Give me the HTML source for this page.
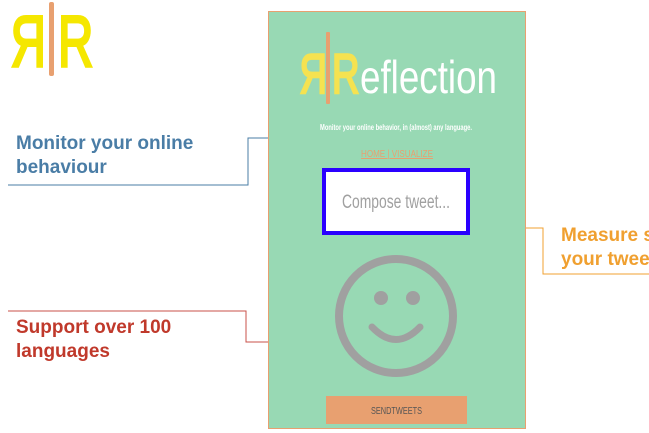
<!DOCTYPE html>
<html><head><meta charset="utf-8"><style>
html,body{margin:0;width:649px;height:433px;overflow:hidden}
body{background:#fff;position:relative;font-family:"Liberation Sans",sans-serif}
.a{position:absolute}
.lbl{font-weight:bold;font-size:19px;line-height:24px}
</style></head><body>
<svg class="a" style="left:0;top:0" width="649" height="433">
 <text x="0" y="0" font-size="72" fill="#f5e700" stroke="#f5e700" stroke-width="3" font-family="Liberation Sans" transform="translate(46,66) scale(-0.68,1)">R</text>
 <text x="0" y="0" font-size="72" fill="#f5e700" stroke="#f5e700" stroke-width="3" font-family="Liberation Sans" transform="translate(58,66) scale(0.68,1)">R</text>
 <rect x="49" y="2" width="5" height="74" rx="2" fill="#e8a070"/>
 <polyline points="8,185 248,185 248,138 268,138" fill="none" stroke="#4a7da6" stroke-width="1"/>
 <polyline points="8,311 246,311 246,342 268,342" fill="none" stroke="#c8504a" stroke-width="1"/>
 <polyline points="526,228 543,228 543,274 649,274" fill="none" stroke="#f0a030" stroke-width="1"/>
 <rect x="268.5" y="11.5" width="257" height="417" fill="#98d9b4" stroke="#e8a070" stroke-width="1"/>
 <text x="0" y="0" font-size="56" fill="#f5e250" stroke="#f5e250" stroke-width="2.5" font-family="Liberation Sans" transform="translate(327,93) scale(-0.68,1)">R</text>
 <text x="0" y="0" font-size="56" fill="#f5e250" stroke="#f5e250" stroke-width="2.5" font-family="Liberation Sans" transform="translate(332,93) scale(0.68,1)">R</text>
 <rect x="326" y="32" width="4" height="72" rx="1" fill="#e8a070"/>
 <text x="360" y="93" font-size="46" fill="#fff" font-family="Liberation Sans" textLength="137" lengthAdjust="spacingAndGlyphs">eflection</text>
 <text x="320" y="130" font-size="8" font-weight="bold" fill="#fff" font-family="Liberation Sans" textLength="152" lengthAdjust="spacingAndGlyphs">Monitor your online behavior, in (almost) any language.</text>
 <text x="361" y="157" font-size="10" fill="#e8a070" font-family="Liberation Sans" textLength="72" lengthAdjust="spacingAndGlyphs" text-decoration="underline">HOME | VISUALIZE</text>
 <rect x="324" y="170" width="144" height="63" fill="#fff" stroke="#2a00ff" stroke-width="4"/>
 <text x="342" y="208" font-size="19" fill="#a0a0a0" font-family="Liberation Sans" textLength="108" lengthAdjust="spacingAndGlyphs">Compose tweet...</text>
 <circle cx="396" cy="316" r="57" fill="none" stroke="#a0a0a0" stroke-width="8"/>
 <circle cx="381" cy="298" r="7" fill="#a0a0a0"/>
 <circle cx="413" cy="298" r="7" fill="#a0a0a0"/>
 <path d="M372 327 Q396 352 420 327" fill="none" stroke="#a0a0a0" stroke-width="7" stroke-linecap="round"/>
 <rect x="326" y="396" width="141" height="28" fill="#e8a070"/>
 <text x="371" y="414" font-size="10" fill="#555" font-family="Liberation Sans" textLength="51" lengthAdjust="spacingAndGlyphs">SENDTWEETS</text>
</svg>
<div class="a lbl" style="left:16px;top:132px;color:#4a7da6">Monitor your online<br>behaviour</div>
<div class="a lbl" style="left:16px;top:316px;color:#c0392b">Support over 100<br>languages</div>
<div class="a lbl" style="left:561px;top:224px;width:88px;overflow:hidden;color:#f0a030;white-space:nowrap">Measure sentiment<br>your tweets</div>
</body></html>
